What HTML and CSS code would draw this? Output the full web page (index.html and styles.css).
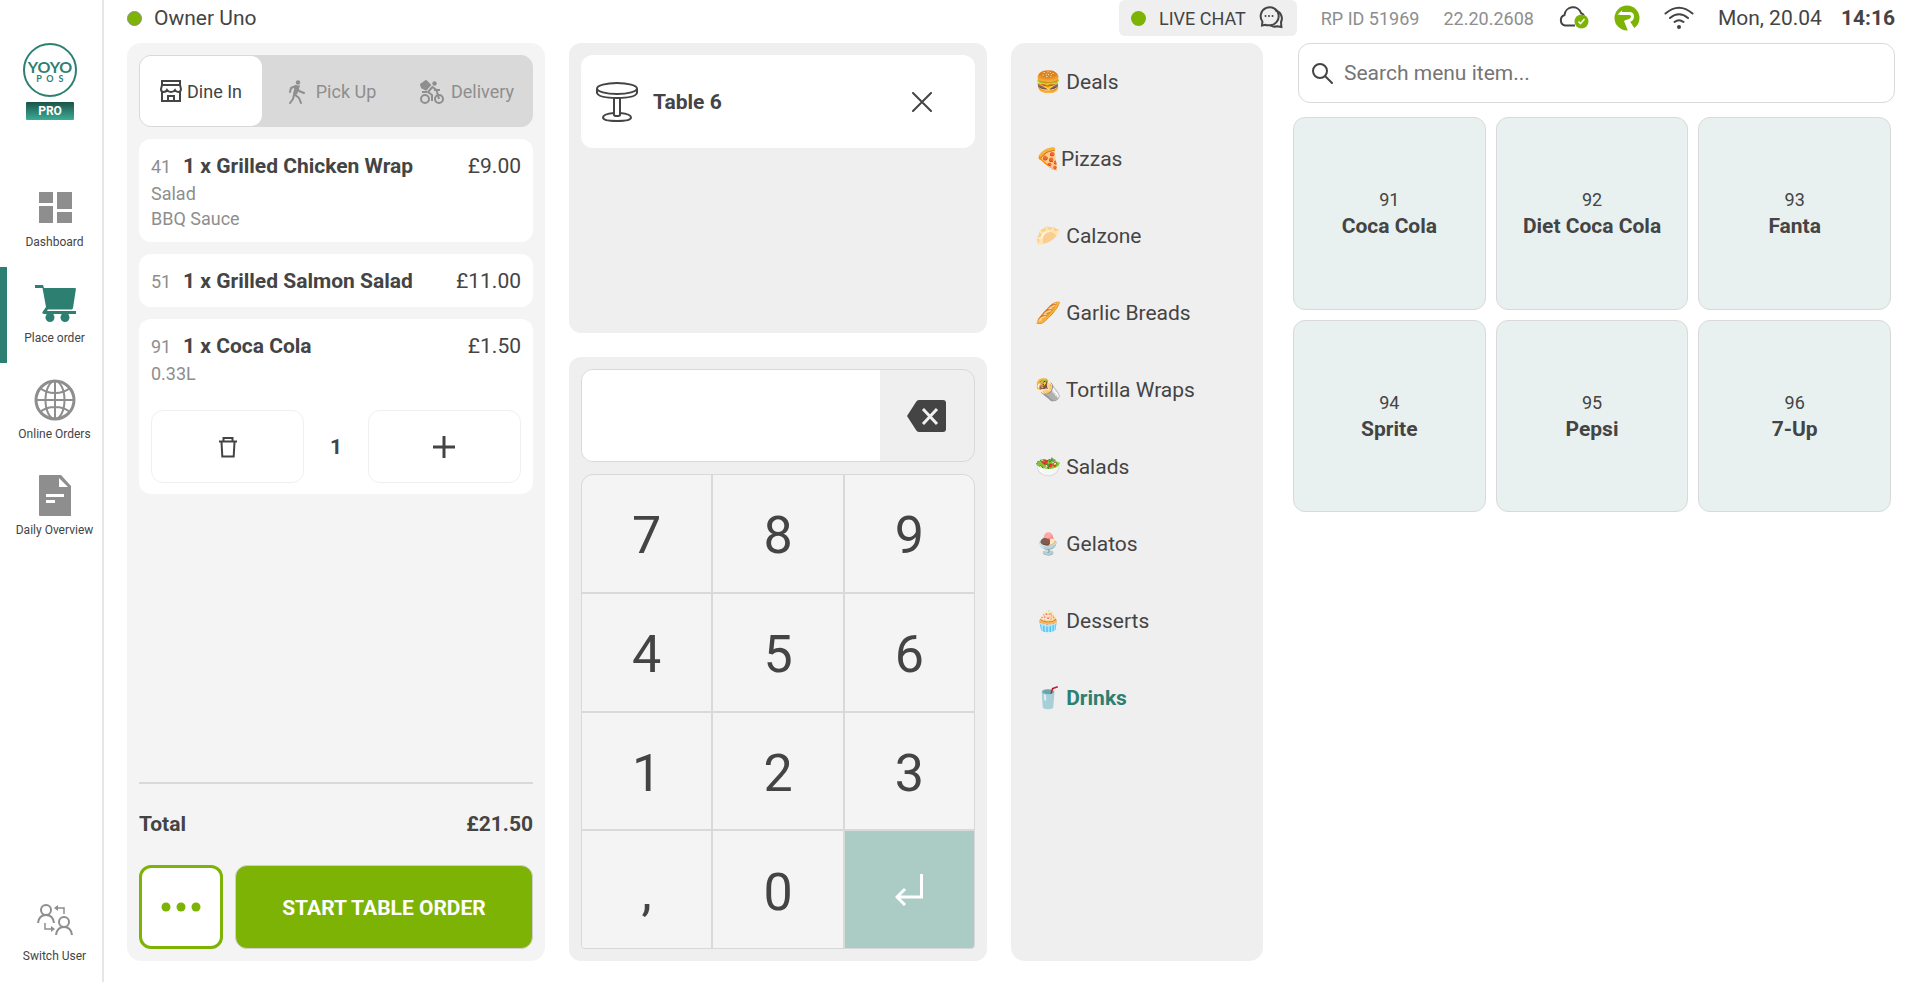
FILE: index.html
```html
<!DOCTYPE html>
<html lang="en">
<head>
    <meta charset="UTF-8">
    <meta name="viewport" content="width=device-width, initial-scale=1.0">
    <title>YOYO POS</title>
    <link rel="stylesheet" href="styles.css">
</head>
<body>
    <nav class="sidebar">
        <div class="logo">
            <svg width="54" height="54" viewBox="0 0 54 54">
                <circle cx="27" cy="27" r="26" fill="#fff" stroke="#2d8071" stroke-width="2"/>
                <text class="logo-name" x="27" y="30" text-anchor="middle">YOYO</text>
                <text class="logo-sub" x="16" y="39" text-anchor="middle">P</text>
                <text class="logo-sub" x="27" y="39" text-anchor="middle">O</text>
                <text class="logo-sub" x="38" y="39" text-anchor="middle">S</text>
            </svg>
            <span class="logo-badge">PRO</span>
        </div>
        <a href="#" class="nav-item">
            <svg width="42" height="42" viewBox="0 0 42 42" fill="#8e8e8e">
                <path d="M5 5h14v11H5zM23 5h15v17H23zM5 19h14v17H5zM23 25h15v11H23z"/>
            </svg>
            <span>Dashboard</span>
        </a>
        <a href="#" class="nav-item active">
            <svg width="42" height="42" viewBox="0 0 42 42">
                <path d="M1 2h8l1 3h31q1 0 .9 1.200L39 25q-.3 1.600-2 1.600H14.500q-1.200 0-1.300 1.400H42v3H10q-2 0-1.700-1.700l3.700-5.300L8.500 5H1z" fill="#2d8071"/>
                <circle cx="16" cy="34.500" r="4.500" fill="#2d8071"/>
                <circle cx="31" cy="34.500" r="4.500" fill="#2d8071"/>
            </svg>
            <span>Place order</span>
        </a>
        <a href="#" class="nav-item">
            <svg width="42" height="42" viewBox="0 0 42 42" fill="none" stroke="#8e8e8e" stroke-width="2">
                <circle cx="21" cy="21" r="19" stroke-width="3"/>
                <ellipse cx="21" cy="21" rx="9.500" ry="19"/>
                <path d="M21 2v38M2 21h38M6 9q6 5 15 5t15-5M6 33q6-5 15-5t15 5"/>
            </svg>
            <span>Online Orders</span>
        </a>
        <a href="#" class="nav-item">
            <svg width="42" height="42" viewBox="0 0 42 42">
                <path d="M6 0h21l10 11v30H6q-1 0-1-1V1q0-1 1-1z" fill="#8e8e8e"/>
                <path d="M25 3v9h9zM12 19h18v3H12zM12 25h9v3h-9z" fill="#fff"/>
            </svg>
            <span>Daily Overview</span>
        </a>
        <a href="#" class="nav-item switch-user">
            <svg width="36" height="32" viewBox="0 0 36 32" fill="none" stroke="#8e8e8e" stroke-width="2">
                <circle cx="9" cy="6" r="5"/>
                <path d="M1 19q1-8 8-8t8 8"/>
                <circle cx="27" cy="18" r="5"/>
                <path d="M19 31q1-8 8-8t8 8"/>
                <path d="M27 10V4h-8M8 19v6h7" stroke-width="1.500"/>
                <path d="M21 1v6l-4-3zM14 22v6l4-3z" fill="#8e8e8e" stroke="none"/>
            </svg>
            <span>Switch User</span>
        </a>
    </nav>

    <div class="page">
        <header class="topbar">
            <span class="dot dot-user"></span>
            <span class="user">Owner Uno</span>
            <button type="button" class="live-chat">
                <span class="dot"></span>
                LIVE CHAT
                <svg width="24" height="24" viewBox="0 0 24 24" fill="none" stroke="#444" stroke-width="2">
                    <path d="M3 19.500l.4-4A9 9 0 1 1 10 19.200q-2 .3-3.400-.4z"/>
                    <path d="M16.500 4.600A8 8 0 0 1 22 16l.4 5-4-.8q-4 1.200-6.800-1"/>
                    <g fill="#444" stroke="none"><circle cx="6.500" cy="10" r="1"/><circle cx="10" cy="10" r="1"/><circle cx="13.500" cy="10" r="1"/></g>
                </svg>
            </button>
            <span class="meta">RP ID 51969</span>
            <span class="meta">22.20.2608</span>
            <svg class="cloud" width="32" height="24" viewBox="0 0 32 24">
                <path d="M17 19.500H7A5.500 5.500 0 0 1 6.500 9 8.500 8.500 0 0 1 23 7q2.600 1 3.500 4" fill="none" stroke="#444" stroke-width="2"/>
                <circle cx="23.500" cy="15.500" r="7" fill="#7db305"/>
                <path d="M20.500 15.500l2 2.200 4-4.700" fill="none" stroke="#fff" stroke-width="1.500"/>
            </svg>
            <svg class="brand" width="26" height="26" viewBox="0 0 26 26">
                <circle cx="13" cy="13" r="12.500" fill="#7db305"/>
                <path d="M6 8.500h9.500q3 0 3 3t-3 4L11 17" fill="none" stroke="#fff" stroke-width="3"/>
                <path d="M3.500 9.500L8 5.500V10zM10 16l5-1 6 9-4 2h-3z" fill="#fff"/>
            </svg>
            <svg class="wifi" width="30" height="24" viewBox="0 0 30 24" fill="none" stroke="#444" stroke-width="2" stroke-linecap="round">
                <path d="M1.500 7.500Q15-4 28.500 7.500M6 12q9-7.500 18 0M10.500 16q4.500-3.500 9 0"/>
                <circle cx="15" cy="21" r="2" fill="#444" stroke="none"/>
            </svg>
            <span class="date">Mon, 20.04</span>
            <span class="time">14:16</span>
        </header>

        <main class="columns">
            <section class="order">
                <div class="tabs">
                    <button type="button" class="tab selected">
                        <svg width="22" height="22" viewBox="0 0 22 22" fill="none" stroke="#444" stroke-width="2">
                            <path d="M2 1h18v4H2zM2 5L1 9q0 3 2.500 3T7 10q1.500 2 4 2t4-2q1.200 2 3.500 2T21 9l-1-4M2 12v9h18v-9M8 21v-5h6v5"/>
                        </svg>
                        Dine In
                    </button>
                    <button type="button" class="tab pickup">
                        <svg width="18" height="24" viewBox="0 0 18 24" fill="none" stroke="#8e8e8e" stroke-width="2" stroke-linecap="round">
                            <circle cx="10" cy="2.500" r="2.200" fill="#8e8e8e" stroke="none"/>
                            <path d="M2 12l1-4 5-2 3 5 5 2M8 6L6 14l5 4 2 5M6 15l-1 4-3 4" stroke-linejoin="round"/>
                            <path d="M7 7h3l-2 6" stroke-width="3"/>
                        </svg>
                        Pick Up
                    </button>
                    <button type="button" class="tab">
                        <svg width="24" height="24" viewBox="0 0 24 24" fill="none" stroke="#8e8e8e" stroke-width="2">
                            <circle cx="5" cy="19" r="4"/>
                            <circle cx="19" cy="19" r="4"/>
                            <path d="M1 4.500L6 1l4 4-4 4.500-4-2z" fill="#8e8e8e"/>
                            <circle cx="14.500" cy="3.500" r="2.200" fill="#8e8e8e" stroke="none"/>
                            <path d="M19 19l-2.500-9-4-3L8 12l4 3v6" stroke-linejoin="round"/>
                            <path d="M14 10h6M2 12h5"/>
                        </svg>
                        Delivery
                    </button>
                </div>

                <article class="item">
                    <div class="item-row">
                        <span class="item-no">41</span>
                        <strong class="item-name">1 x Grilled Chicken Wrap</strong>
                        <span class="price">£9.00</span>
                    </div>
                    <div class="item-extra">Salad</div>
                    <div class="item-extra">BBQ Sauce</div>
                </article>
                <article class="item">
                    <div class="item-row">
                        <span class="item-no">51</span>
                        <strong class="item-name">1 x Grilled Salmon Salad</strong>
                        <span class="price">£11.00</span>
                    </div>
                </article>
                <article class="item">
                    <div class="item-row">
                        <span class="item-no">91</span>
                        <strong class="item-name">1 x Coca Cola</strong>
                        <span class="price">£1.50</span>
                    </div>
                    <div class="item-extra">0.33L</div>
                    <div class="quantity">
                        <button type="button" class="qty-btn" aria-label="Remove">
                            <svg width="20" height="22" viewBox="0 0 20 22" fill="none" stroke="#444" stroke-width="2">
                                <path d="M1 5.500h18M5.500 5V2h9v3M3.500 6l.8 14.500h11.400L16.500 6"/>
                            </svg>
                        </button>
                        <span class="qty">1</span>
                        <button type="button" class="qty-btn" aria-label="Add">
                            <svg width="22" height="22" viewBox="0 0 22 22" stroke="#444" stroke-width="3">
                                <path d="M11 0v22M0 11h22"/>
                            </svg>
                        </button>
                    </div>
                </article>

                <div class="total">
                    <span>Total</span>
                    <span>£21.50</span>
                </div>
                <div class="actions">
                    <button type="button" class="more" aria-label="More">
                        <svg width="40" height="10" viewBox="0 0 40 10" fill="#7db305">
                            <circle cx="5" cy="5" r="4.500"/>
                            <circle cx="20" cy="5" r="4.500"/>
                            <circle cx="35" cy="5" r="4.500"/>
                        </svg>
                    </button>
                    <button type="button" class="start">START TABLE ORDER</button>
                </div>
            </section>

            <div class="middle">
                <section class="panel">
                    <div class="table-card">
                        <svg width="42" height="40" viewBox="0 0 42 40" fill="none" stroke="#444" stroke-width="2">
                            <path d="M18 31q-11 1-11 4.500T21 39t14-3.500T24 31"/>
                            <path d="M18 15v18q0 1 3 1t3-1V15"/>
                            <path d="M1 7v4q2 5 20 5t20-5V7" fill="#fff"/>
                            <ellipse cx="21" cy="6.500" rx="20" ry="5.500" fill="#fff"/>
                        </svg>
                        <strong class="table-name">Table 6</strong>
                        <button type="button" class="close" aria-label="Close">
                            <svg width="20" height="20" viewBox="0 0 20 20" stroke="#444" stroke-width="2" stroke-linecap="round">
                                <path d="M1 1l18 18M19 1L1 19"/>
                            </svg>
                        </button>
                    </div>
                </section>

                <section class="panel keypad-panel">
                    <div class="entry">
                        <input type="text" class="entry-input" aria-label="Item number">
                        <button type="button" class="backspace" aria-label="Backspace">
                            <svg width="40" height="32" viewBox="0 0 40 32">
                                <path d="M0 16L9 2q1-2 3-2h24q3 0 3 3v26q0 3-3 3H12q-2 0-3-2z" fill="#444"/>
                                <path d="M16 9l14 15M30 9L16 24" stroke="#efefef" stroke-width="3"/>
                            </svg>
                        </button>
                    </div>
                    <div class="keys">
                        <button type="button" class="key">7</button>
                        <button type="button" class="key">8</button>
                        <button type="button" class="key">9</button>
                        <button type="button" class="key">4</button>
                        <button type="button" class="key">5</button>
                        <button type="button" class="key">6</button>
                        <button type="button" class="key">1</button>
                        <button type="button" class="key">2</button>
                        <button type="button" class="key">3</button>
                        <button type="button" class="key">,</button>
                        <button type="button" class="key">0</button>
                        <button type="button" class="key enter" aria-label="Enter">
                            <svg width="28" height="32" viewBox="0 0 28 32" fill="none" stroke="#fff" stroke-width="3">
                                <path d="M26.500 0v23H2M10 15l-8 8 8 8"/>
                            </svg>
                        </button>
                    </div>
                </section>
            </div>

            <nav class="categories">
                <a href="#">🍔 Deals</a>
                <a href="#">🍕Pizzas</a>
                <a href="#">🥟 Calzone</a>
                <a href="#">🥖 Garlic Breads</a>
                <a href="#">🌯 Tortilla Wraps</a>
                <a href="#">🥗 Salads</a>
                <a href="#">🍨 Gelatos</a>
                <a href="#">🧁 Desserts</a>
                <a href="#" class="current">🥤 Drinks</a>
            </nav>

            <section class="menu">
                <label class="search">
                    <svg width="21" height="21" viewBox="0 0 21 21" fill="none" stroke="#444" stroke-width="2" stroke-linecap="round">
                        <circle cx="8" cy="8" r="7"/>
                        <path d="M13 13l7 7"/>
                    </svg>
                    <input type="text" placeholder="Search menu item..." aria-label="Search menu item">
                </label>
                <div class="tiles">
                    <button type="button" class="tile"><span>91</span><strong>Coca Cola</strong></button>
                    <button type="button" class="tile"><span>92</span><strong>Diet Coca Cola</strong></button>
                    <button type="button" class="tile"><span>93</span><strong>Fanta</strong></button>
                    <button type="button" class="tile"><span>94</span><strong>Sprite</strong></button>
                    <button type="button" class="tile"><span>95</span><strong>Pepsi</strong></button>
                    <button type="button" class="tile"><span>96</span><strong>7-Up</strong></button>
                </div>
            </section>
        </main>
    </div>
</body>
</html>
```
FILE: styles.css
```css
* {
    box-sizing: border-box;
}

body {
    margin: 0;
    display: flex;
    min-height: 100vh;
    font-family: Roboto, "Liberation Sans", sans-serif;
    font-size: 21px;
    color: #444;
    background-color: #fff;
}

button,
input {
    font: inherit;
    color: inherit;
    margin: 0;
    padding: 0;
    border: 0;
    background: none;
}

button {
    cursor: pointer;
}

a {
    color: inherit;
    text-decoration: none;
}

svg {
    display: block;
    flex-shrink: 0;
}

/* sidebar */
.sidebar {
    width: 104px;
    flex-shrink: 0;
    display: flex;
    flex-direction: column;
    padding: 43px 0 18px;
    border-right: 2px solid #e6e6e6;
}

.logo {
    width: 100px;
    height: 128px;
    display: flex;
    flex-direction: column;
    align-items: center;
    gap: 5px;
}

.logo-name,
.logo-sub {
    font-family: Lato, sans-serif;
    font-weight: 700;
    fill: #2d8071;
}

.logo-name {
    font-size: 16px;
}

.logo-sub {
    font-size: 9px;
}

.logo-badge {
    width: 48px;
    border-radius: 1px;
    font-size: 12px;
    font-weight: 700;
    line-height: 18px;
    text-align: center;
    color: #fff;
    background: linear-gradient(#1c5247, #3bad97);
}

.nav-item {
    height: 96px;
    display: flex;
    flex-direction: column;
    align-items: center;
    gap: 5px;
    padding-top: 16px;
    border-left: 7px solid transparent;
    font-size: 12px;
    line-height: 16px;
}

.nav-item.active {
    border-left-color: #2d8071;
}

.switch-user {
    height: auto;
    margin-top: auto;
    gap: 12px;
}

/* top bar */
.page {
    flex: 1;
    display: flex;
    flex-direction: column;
    padding: 0 13px 21px 23px;
}

.topbar {
    height: 36px;
    display: flex;
    align-items: center;
    margin-bottom: 7px;
}

.dot {
    width: 15px;
    height: 15px;
    border-radius: 50%;
    background-color: #7db305;
}

.dot-user {
    border: 1px solid #8e8e8e;
}

.user {
    margin-left: 12px;
}

.live-chat {
    height: 36px;
    display: flex;
    align-items: center;
    gap: 13px;
    margin-left: auto;
    padding: 0 14px 0 12px;
    border-radius: 6px;
    background-color: #efefef;
    font-size: 18px;
}

.meta {
    margin-left: 24px;
    font-size: 18px;
    color: #8e8e8e;
}

.cloud,
.brand,
.wifi,
.date {
    margin-left: 24px;
}

.time {
    margin-left: 19px;
    font-weight: 700;
}

/* columns */
.columns {
    flex: 1;
    display: grid;
    grid-template-columns: 418fr 418fr 252fr 608fr;
    gap: 24px;
}

.order {
    display: flex;
    flex-direction: column;
    gap: 12px;
    padding: 12px;
    border-radius: 14px;
    background-color: #f4f4f4;
}

.tabs {
    height: 72px;
    display: flex;
    border: 1px solid #d9d9d9;
    border-radius: 12px;
    background-color: #d9d9d9;
}

.tab {
    flex: 130;
    display: flex;
    align-items: center;
    justify-content: center;
    gap: 7px;
    padding-top: 1px;
    font-size: 18px;
    color: #8e8e8e;
}

.tab.selected {
    flex: 122;
    gap: 5px;
    padding: 0;
    border-radius: 11px;
    color: #444;
    background-color: #fff;
}

.tab.pickup {
    flex: 140;
    gap: 10px;
}

.item {
    padding: 13px 12px 11px;
    border-radius: 12px;
    background-color: #fff;
}

.item-row {
    display: flex;
    align-items: center;
    line-height: 29px;
}

.item-no {
    width: 32px;
    font-size: 18px;
    color: #8e8e8e;
}

.item-name {
    flex: 1;
}

.item-extra {
    font-size: 18px;
    line-height: 25px;
    color: #8e8e8e;
}

.quantity {
    display: grid;
    grid-template-columns: 12fr 5fr 12fr;
    align-items: center;
    margin-top: 24px;
}

.qty-btn {
    height: 73px;
    display: flex;
    align-items: center;
    justify-content: center;
    border: 1px solid #f0f0f0;
    border-radius: 12px;
}

.qty {
    font-weight: 700;
    text-align: center;
}

.total {
    display: flex;
    justify-content: space-between;
    margin-top: auto;
    padding: 27px 0 16px;
    border-top: 2px solid #d9d9d9;
    font-weight: 700;
    line-height: 26px;
}

.actions {
    height: 84px;
    display: flex;
    gap: 12px;
}

.more {
    width: 84px;
    display: flex;
    align-items: center;
    justify-content: center;
    border: 3px solid #7db305;
    border-radius: 12px;
    background-color: #fff;
}

.start {
    flex: 1;
    padding-top: 2px;
    border: 1px solid #d0d0d0;
    border-radius: 12px;
    font-weight: 700;
    color: #fff;
    background-color: #7db305;
}

/* table and keypad */
.middle {
    display: grid;
    grid-template-rows: 290fr 604fr;
    gap: 24px;
}

.panel {
    padding: 12px;
    border-radius: 12px;
    background-color: #efefef;
}

.table-card {
    display: flex;
    align-items: center;
    gap: 15px;
    height: 93px;
    padding: 0 43px 0 15px;
    border-radius: 12px;
    background-color: #fff;
}

.table-name {
    flex: 1;
}

.keypad-panel {
    display: flex;
    flex-direction: column;
    gap: 12px;
}

.entry {
    height: 93px;
    display: flex;
    overflow: hidden;
    border: 1px solid #d9d9d9;
    border-radius: 12px;
}

.entry-input {
    flex: 1;
    min-width: 0;
    padding: 0 12px;
    background-color: #fff;
}

.backspace {
    width: 94px;
    display: flex;
    align-items: center;
    justify-content: center;
}

.keys {
    flex: 1;
    display: grid;
    grid-template-columns: repeat(3, 1fr);
    grid-template-rows: repeat(4, 1fr);
    gap: 2px;
    border: 1px solid #d9d9d9;
    border-radius: 12px 12px 4px 4px;
    overflow: hidden;
    background-color: #d9d9d9;
}

.key {
    padding-top: 5px;
    font-size: 52px;
    background-color: #f4f4f4;
}

.enter {
    display: flex;
    align-items: center;
    justify-content: center;
    padding: 0;
    background-color: #aaccc4;
}

/* categories */
.categories {
    padding: 1px 0 0 24px;
    border-radius: 14px;
    background-color: #efefef;
}

.categories a {
    display: block;
    line-height: 77px;
}

.categories .current {
    font-weight: 700;
    color: #2d8071;
}

/* menu */
.menu {
    padding: 0 4px 0 6px;
}

.search {
    height: 60px;
    display: flex;
    align-items: center;
    gap: 11px;
    margin: 0 -4px 14px 5px;
    padding: 0 13px;
    border: 1px solid #d9d9d9;
    border-radius: 12px;
}

.search input {
    flex: 1;
    outline: none;
}

.search input::placeholder {
    color: #757575;
}

.tiles {
    display: grid;
    grid-template-columns: repeat(3, 1fr);
    gap: 10px;
}

.tile {
    aspect-ratio: 1;
    display: flex;
    flex-direction: column;
    align-items: center;
    justify-content: center;
    border: 1px solid #d9d9d9;
    border-radius: 12px;
    line-height: 27px;
    background-color: #e8f1ef;
}

.tile span {
    font-size: 18px;
}
```
